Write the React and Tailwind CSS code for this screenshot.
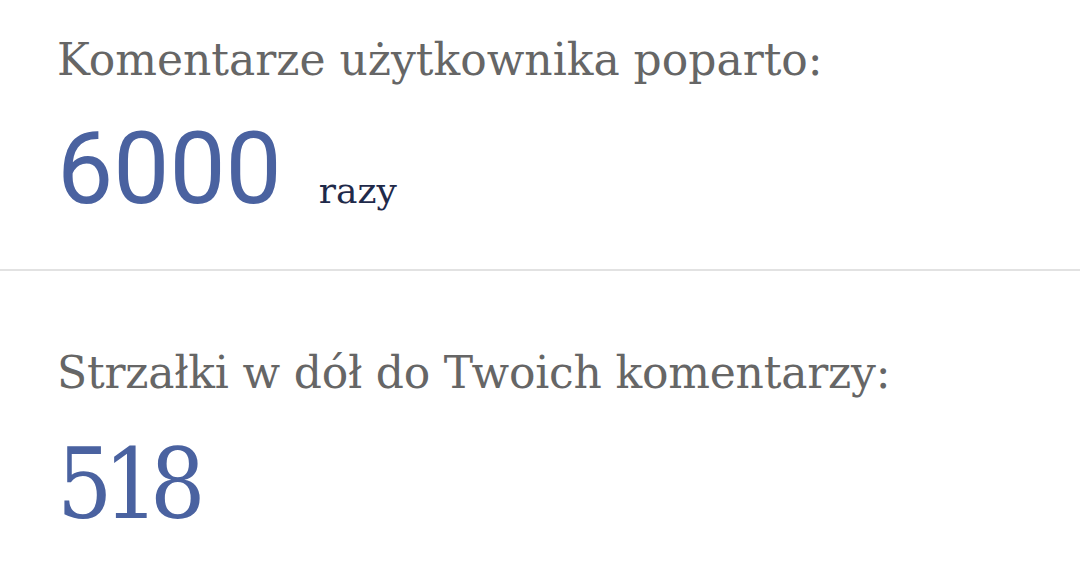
export default function App() {
  return (
    <div className="w-[1080px] h-[566px] bg-white overflow-hidden">
      <div className="box-border h-[271px] pl-[57px] pt-[34px] border-b-2 border-[#e2e2e2]">
        <div className="font-['DejaVu_Serif',serif] text-[44px] leading-[52px] text-[#666666]">
          Komentarze użytkownika poparto:
        </div>
        <div className="flex items-baseline mt-[33px]">
          <span className="font-['Roboto',sans-serif] text-[100px] leading-[100px] text-[#4a62a0]">6000</span>
          <span className="ml-[37px] font-['DejaVu_Serif',serif] text-[36px] leading-[40px] text-[#1f2a4a]">razy</span>
        </div>
      </div>
      <div className="pl-[57px] pt-[76px]">
        <div className="font-['DejaVu_Serif',serif] text-[44px] leading-[52px] tracking-[-0.2px] text-[#666666]">
          Strzałki w dół do Twoich komentarzy:
        </div>
        <div className="mt-[36px] font-['DejaVu_Serif_Condensed','DejaVu_Serif',serif] text-[97px] leading-[100px] tracking-[-9px] text-[#4a62a0]">518</div>
      </div>
    </div>
  );
}
